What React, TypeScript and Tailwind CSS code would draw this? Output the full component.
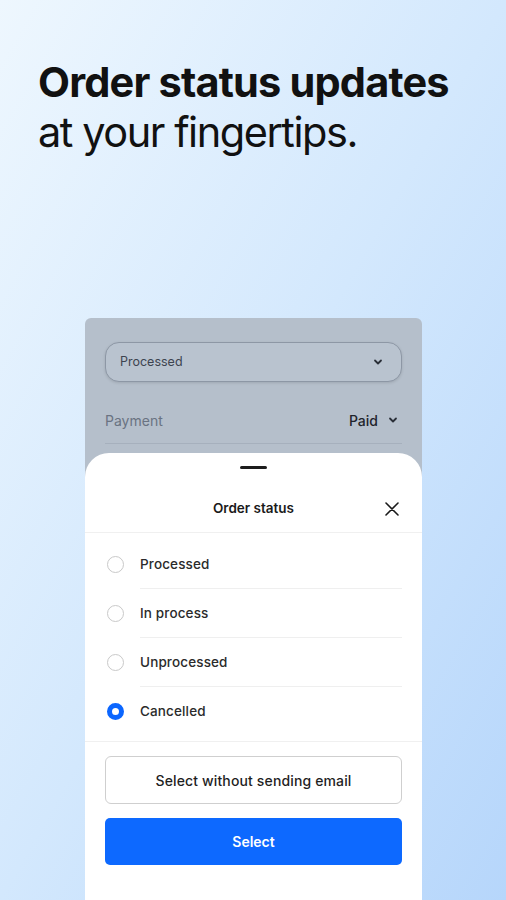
export default function App() {
  const options = ['Processed', 'In process', 'Unprocessed', 'Cancelled']
  const selected = 'Cancelled'

  return (
    <div
      className="flex h-[900px] w-full flex-col overflow-hidden bg-linear-to-br from-[#eef7fe] via-[#d3e8fd] to-[#b6d6fb]"
      style={{ fontFamily: 'Inter, "Noto Sans", sans-serif' }}
    >
      <h1 className="px-[38px] pt-[57px] text-[41.5px] leading-[50px] text-[#111111]">
        <span className="block font-bold tracking-[-0.02em]">Order status updates</span>
        <span className="block font-normal tracking-[-0.035em]">at your fingertips.</span>
      </h1>

      <div className="mt-[161px] ml-[85px] flex w-[337px] flex-1 flex-col rounded-t-[6px] bg-[#b5bfcb]">
        <div className="px-[20px] pt-[24px]">
          <div className="flex h-[40px] items-center justify-between rounded-[14px] border border-[#8d97a5] bg-[#b9c3cf] pr-[18px] pl-[14px] shadow-[0_1px_3px_rgba(0,0,0,0.12)]">
            <span className="text-[12.5px] text-[#3d4450]">Processed</span>
            <Chevron className="h-[10px] w-[10px] text-[#2a2f38]" />
          </div>
          <div className="mt-[15px] flex h-[47px] items-center justify-between border-b border-[#a6b0bd]">
            <span className="text-[14px] text-[#6a7382]">Payment</span>
            <span className="flex items-center gap-[10px] pr-[4px]">
              <span className="text-[14px] font-medium text-[#1f242c]">Paid</span>
              <Chevron className="h-[10px] w-[10px] text-[#2a2f38]" />
            </span>
          </div>
        </div>

        <div className="mt-[9px] flex flex-1 flex-col rounded-t-[24px] bg-white">
          <div className="mx-auto mt-[13px] h-[3px] w-[27px] rounded-full bg-[#1d1d1d]" />
          <div className="relative mt-[16px] flex h-[48px] items-center justify-center border-b border-[#f0f0f0]">
            <span className="text-[13.5px] font-semibold text-[#1a1a1a]">Order status</span>
            <svg
              className="absolute right-[22px] h-[16px] w-[16px] text-[#1a1a1a]"
              viewBox="0 0 16 16"
              fill="none"
              stroke="currentColor"
              strokeWidth="1.6"
              strokeLinecap="round"
            >
              <path d="M2 2l12 12M14 2L2 14" />
            </svg>
          </div>

          <ul className="border-b border-[#f0f0f0] pt-[7px] pb-[5px]">
            {options.map((o, i) => (
              <li key={o} className="flex h-[49px] items-center pl-[22px]">
                {o === selected ? (
                  <span className="h-[17px] w-[17px] rounded-full border-[5px] border-[#0b66ff] bg-white" />
                ) : (
                  <span className="h-[17px] w-[17px] rounded-full border-[1.5px] border-[#c9c9c9] bg-white" />
                )}
                <div
                  className={
                    'ml-[16px] mr-[20px] flex h-full flex-1 items-center ' +
                    (i < options.length - 1 ? 'border-b border-[#efefef]' : '')
                  }
                >
                  <span className="text-[13.5px] font-medium tracking-[0.01em] text-[#2b2b2b]">{o}</span>
                </div>
              </li>
            ))}
          </ul>

          <div className="flex flex-col gap-[14px] px-[20px] pt-[14px]">
            <button className="flex h-[48px] items-center justify-center rounded-[6px] border border-[#cfcfcf] bg-white text-[14px] font-medium tracking-[0.01em] text-[#1f1f1f]">
              Select without sending email
            </button>
            <button className="flex h-[47px] items-center justify-center rounded-[5px] bg-[#0d69ff] text-[14px] font-semibold text-white">
              Select
            </button>
          </div>
        </div>
      </div>
    </div>
  )
}

function Chevron({ className }: { className?: string }) {
  return (
    <svg
      className={className}
      viewBox="0 0 10 10"
      fill="none"
      stroke="currentColor"
      strokeWidth="1.8"
      strokeLinecap="round"
      strokeLinejoin="round"
    >
      <path d="M2 3.5l3 3 3-3" />
    </svg>
  )
}
